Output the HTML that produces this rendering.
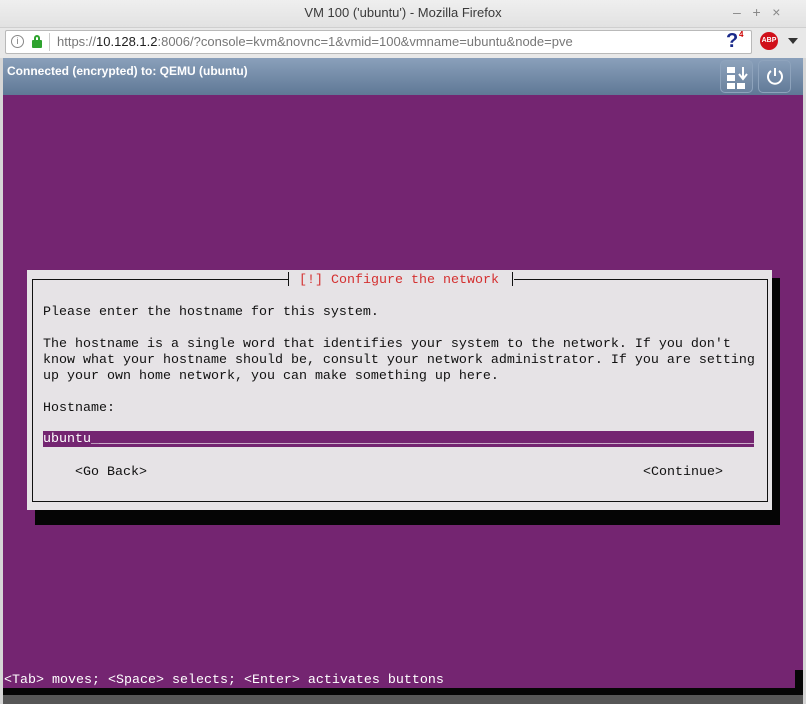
<!DOCTYPE html>
<html><head><meta charset="utf-8"><style>
*{margin:0;padding:0;box-sizing:border-box}
body{width:806px;height:704px;overflow:hidden;background:#d6d6d6;font-family:"Liberation Sans",sans-serif;position:relative}
.abs{position:absolute}
.mono{font-family:"Liberation Mono",monospace;font-size:13.33px;line-height:16px;white-space:pre;color:#111}
</style></head><body>
<div class="abs" style="left:0;top:0;width:806px;height:28px;background:linear-gradient(#efefef,#e2e2e2);border-bottom:1px solid #cfcfcf"></div>
<div class="abs" style="left:0;top:5px;width:806px;text-align:center;font-size:13px;color:#3a3a3a">VM 100 ('ubuntu') - Mozilla Firefox</div>
<div class="abs" style="left:733px;top:4px;font-size:14px;color:#888;letter-spacing:0">–&nbsp;&nbsp;&nbsp;+&nbsp;&nbsp;&nbsp;×</div>
<div class="abs" style="left:0;top:28px;width:806px;height:30px;background:#e8e8e8"></div>
<div class="abs" style="left:5px;top:30px;width:747px;height:24px;background:#fff;border:1px solid #b9b9b9;border-radius:2px"></div>
<div class="abs" style="left:11px;top:35px;width:13px;height:13px;border:1px solid #888;border-radius:50%;font-size:9px;color:#777;text-align:center;line-height:11px">i</div>
<div class="abs" style="left:32px;top:40px;width:10px;height:8px;background:#2fa32f;border-radius:1px"></div>
<div class="abs" style="left:34px;top:35px;width:6px;height:7px;border:2px solid #2fa32f;border-bottom:none;border-radius:3px 3px 0 0"></div>
<div class="abs" style="left:49px;top:33px;width:1px;height:18px;background:#ccc"></div>
<div class="abs" style="left:57px;top:34px;font-size:13px;color:#777">https://<span style="color:#222">10.128.1.2</span>:8006/?console=kvm&amp;novnc=1&amp;vmid=100&amp;vmname=ubuntu&amp;node=pve</div>
<div class="abs" style="left:726px;top:30px;font-size:20px;font-weight:bold;color:#1a2a8a">?</div>
<div class="abs" style="left:739px;top:30px;font-size:8px;color:#c00;font-weight:bold">4</div>
<div class="abs" style="left:760px;top:32px;width:18px;height:18px;background:#d0101a;border-radius:50%;color:#fff;font-size:7px;font-weight:bold;text-align:center;line-height:18px">ABP</div>
<div class="abs" style="left:788px;top:38px;border-left:5px solid transparent;border-right:5px solid transparent;border-top:6px solid #333"></div>
<div class="abs" style="left:0;top:58px;width:806px;height:37px;background:linear-gradient(#8aa0bb,#5f7896);border-left:3px solid #d6d6d6;border-right:3px solid #d6d6d6"></div>
<div class="abs" style="left:7px;top:64px;font-size:12px;font-weight:bold;color:#fff">Connected (encrypted) to: QEMU (ubuntu)</div>
<div class="abs" style="left:720px;top:60px;width:33px;height:33px;border:1px solid #8ea3bc;border-radius:5px;background:rgba(255,255,255,0.05)"></div>
<div class="abs" style="left:727px;top:67px;width:8px;height:6px;background:#fff"></div>
<div class="abs" style="left:727px;top:75px;width:8px;height:6px;background:#fff"></div>
<div class="abs" style="left:727px;top:83px;width:8px;height:6px;background:#fff"></div>
<div class="abs" style="left:737px;top:83px;width:8px;height:6px;background:#fff"></div>
<svg class="abs" style="left:736px;top:66px" width="14" height="16"><path d="M7 1v11M3 8l4 5 4-5" stroke="#fff" stroke-width="2" fill="none"/></svg>
<div class="abs" style="left:758px;top:60px;width:33px;height:33px;border:1px solid #8ea3bc;border-radius:5px"></div>
<svg class="abs" style="left:764px;top:65px" width="22" height="22"><path d="M7 6A7 7 0 1 0 15 6" stroke="#fff" stroke-width="2" fill="none"/><path d="M11 3v8" stroke="#fff" stroke-width="2"/></svg>
<div class="abs" style="left:3px;top:95px;width:800px;height:593px;background:#742571"></div>
<div class="abs" style="left:3px;top:688px;width:800px;height:7px;background:#060606"></div>
<div class="abs" style="left:795px;top:670px;width:8px;height:18px;background:#060606"></div>
<div class="abs" style="left:3px;top:695px;width:800px;height:9px;background:#575757"></div>
<div class="abs" style="left:35px;top:278px;width:745px;height:247px;background:#050505"></div>
<div class="abs" style="left:27px;top:270px;width:745px;height:240px;background:#e6e3e6"></div>
<div class="abs" style="left:32px;top:279px;width:736px;height:223px;border:1px solid #111"></div>
<div class="abs" style="left:288px;top:272px;width:226px;height:14px;background:#e6e3e6"></div>
<div class="abs" style="left:288px;top:272px;width:1px;height:14px;background:#111"></div>
<div class="abs" style="left:512px;top:272px;width:1px;height:14px;background:#111"></div>
<div class="abs mono" style="left:299px;top:273px;color:#d43030">[!] Configure the network</div>
<div class="abs mono" style="left:43px;top:305px">Please enter the hostname for this system.

The hostname is a single word that identifies your system to the network. If you don't
know what your hostname should be, consult your network administrator. If you are setting
up your own home network, you can make something up here.

Hostname:</div>
<div class="abs" style="left:43px;top:431px;width:711px;height:16px;background:#742571"></div>
<div class="abs mono" style="left:43px;top:432px;color:#fff;overflow:hidden;width:711px">ubuntu<span style="color:#e6e3e6">_</span>___________________________________________________________________________________</div>
<div class="abs mono" style="left:75px;top:465px">&lt;Go Back&gt;</div>
<div class="abs mono" style="left:643px;top:465px">&lt;Continue&gt;</div>
<div class="abs mono" style="left:4px;top:673px;color:#fff">&lt;Tab&gt; moves; &lt;Space&gt; selects; &lt;Enter&gt; activates buttons</div>
</body></html>
